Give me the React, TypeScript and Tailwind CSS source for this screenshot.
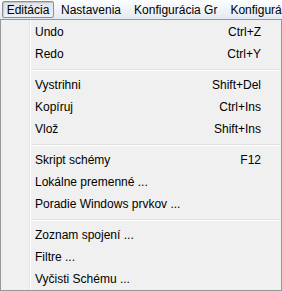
import React from "react"

type Item = { label: string; shortcut?: string } | "sep"

const items: Item[] = [
  { label: "Undo", shortcut: "Ctrl+Z" },
  { label: "Redo", shortcut: "Ctrl+Y" },
  "sep",
  { label: "Vystrihni", shortcut: "Shift+Del" },
  { label: "Kopíruj", shortcut: "Ctrl+Ins" },
  { label: "Vlož", shortcut: "Shift+Ins" },
  "sep",
  { label: "Skript schémy", shortcut: "F12" },
  { label: "Lokálne premenné ..." },
  { label: "Poradie Windows prvkov ..." },
  "sep",
  { label: "Zoznam spojení ..." },
  { label: "Filtre ..." },
  { label: "Vyčisti Schému ..." },
]

const menus = ["Nastavenia", "Konfigurácia Gr", "Konfigurácia"]

export default function App() {
  return (
    <div
      className="w-[282px] h-[291px] overflow-hidden bg-white text-[12px] text-black"
      style={{ fontFamily: '"Liberation Sans", Arial, sans-serif' }}
    >
      {/* menu bar */}
      <div className="h-[19px] flex items-start whitespace-nowrap overflow-hidden bg-gradient-to-b from-[#fcfdfe] to-[#e4eaf3] pl-[2px] pt-[1px]">
        <div className="h-[17px] w-[52px] shrink-0 flex items-center justify-center border border-[#8e8f8f] rounded-[2px] bg-gradient-to-b from-[#e1e4e8] to-[#eef0f2] shadow-[inset_1px_1px_1px_rgba(0,0,0,0.15)]">
          Editácia
        </div>
        {menus.map((m) => (
          <div key={m} className="h-[17px] shrink-0 pl-[7px] pr-[6px] flex items-center">
            {m}
          </div>
        ))}
      </div>

      {/* dropdown */}
      <div className="relative h-[272px] border border-[#979797] bg-[#f0f0f0] pt-[1px]">
        <div className="absolute left-[28px] top-0 bottom-0 w-[2px] border-l border-[#e2e3e3] bg-white" />
        {items.map((it, i) =>
          it === "sep" ? (
            <div key={i} className="h-[9px] flex flex-col justify-center pl-[30px] pr-[1px]">
              <div className="h-px bg-[#e0e0e0]" />
              <div className="h-px bg-white" />
            </div>
          ) : (
            <div key={i} className="h-[22px] flex items-center justify-between pl-[34px] pr-[20px]">
              <span>{it.label}</span>
              {it.shortcut && <span>{it.shortcut}</span>}
            </div>
          )
        )}
      </div>
    </div>
  )
}
